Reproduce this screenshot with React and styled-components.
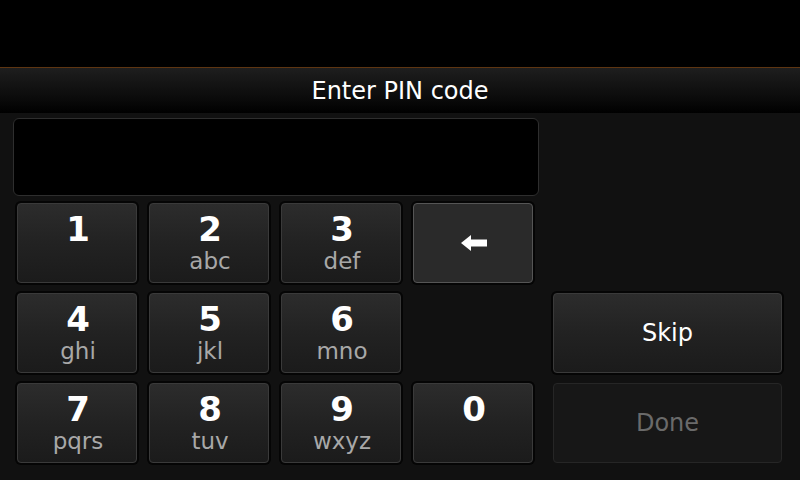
import React from "react";
import styled, { createGlobalStyle } from "styled-components";

const GlobalStyle = createGlobalStyle`
  html, body {
    margin: 0;
    padding: 0;
    background: #111111;
    font-family: "DejaVu Sans", "Noto Sans", sans-serif;
  }
`;

// 6 columns per row: four keys, a narrow spacer column, the action column
const keys = [
  { digit: "1", letters: "" },
  { digit: "2", letters: "abc" },
  { digit: "3", letters: "def" },
  { back: true },
  null,
  null,
  { digit: "4", letters: "ghi" },
  { digit: "5", letters: "jkl" },
  { digit: "6", letters: "mno" },
  null,
  null,
  { action: "Skip" },
  { digit: "7", letters: "pqrs" },
  { digit: "8", letters: "tuv" },
  { digit: "9", letters: "wxyz" },
  { digit: "0", letters: "" },
  null,
  { action: "Done", disabled: true },
];

const BackArrow = () => (
  <svg width="28" height="18" viewBox="0 0 28 18">
    <path d="M1 9 L11 1 L11 5.5 L27 5.5 L27 12.5 L11 12.5 L11 17 Z" fill="#fff" />
  </svg>
);

const App = () => {
  return (
    <Screen>
      <GlobalStyle />
      <TopStrip />
      <Header>
        <Title>Enter PIN code</Title>
      </Header>
      <Content>
        <PinField />
        <Pad>
          {keys.map((k, i) => {
            if (!k) return <Spacer key={i} />;
            if (k.back)
              return (
                <BackKey key={i}>
                  <BackArrow />
                </BackKey>
              );
            if (k.action)
              return (
                <ActionKey key={i} $disabled={k.disabled}>
                  {k.action}
                </ActionKey>
              );
            return (
              <Key key={i}>
                <Digit>{k.digit}</Digit>
                {k.letters && <Letters>{k.letters}</Letters>}
              </Key>
            );
          })}
        </Pad>
      </Content>
    </Screen>
  );
};
export default App;

const Screen = styled.div`
  width: 800px;
  height: 480px;
  background: #111111;
  overflow: hidden;
`;

const TopStrip = styled.div`
  height: 67px;
  background: #000;
  border-bottom: 1px solid #5e3511;
`;

const Header = styled.div`
  height: 45px;
  display: flex;
  align-items: center;
  justify-content: center;
  background: linear-gradient(to bottom, #1e1e1e 0%, #0a0a0a 70%, #000 100%);
`;

const Title = styled.div`
  color: #fff;
  font-size: 24px;
  margin-top: 1px;
`;

const Content = styled.div`
  padding: 5px 0 0 13px;
`;

const PinField = styled.div`
  width: 524px;
  height: 76px;
  background: #000;
  border: 1px solid #2e2e2e;
  border-radius: 6px;
`;

const Pad = styled.div`
  display: grid;
  grid-template-columns: repeat(4, 124px) 0 233px;
  grid-auto-rows: 84px;
  column-gap: 8px;
  row-gap: 6px;
  margin-top: 5px;
  margin-left: 2px;
`;

const Spacer = styled.div``;

const KeyBase = styled.div`
  margin: 2px;
  box-sizing: border-box;
  border-radius: 4px;
  box-shadow: 0 0 0 2px #050505;
  color: #fff;
`;

const Key = styled(KeyBase)`
  display: flex;
  flex-direction: column;
  align-items: center;
  padding-top: 8px;
  padding-left: 2px;
  border: 1px solid #3a3a3a;
  background: linear-gradient(to bottom, #2c2c2c 0%, #222 50%, #1b1b1b 100%);
`;

const BackKey = styled(KeyBase)`
  display: flex;
  align-items: center;
  justify-content: center;
  border: 1px solid #555;
  background: #2a2a2a;
  padding-left: 2px;
`;

const ActionKey = styled(KeyBase)`
  display: flex;
  align-items: center;
  justify-content: center;
  font-size: 24px;
  border: 1px solid ${(p) => (p.$disabled ? "#262626" : "#3a3a3a")};
  color: ${(p) => (p.$disabled ? "#6a6a6a" : "#fff")};
  box-shadow: ${(p) => (p.$disabled ? "none" : "0 0 0 2px #050505")};
  background: ${(p) =>
    p.$disabled
      ? "#171717"
      : "linear-gradient(to bottom, #2c2c2c 0%, #222 50%, #1b1b1b 100%)"};
`;

const Digit = styled.div`
  font-size: 34px;
  line-height: 34px;
  font-weight: bold;
`;

const Letters = styled.div`
  font-size: 23px;
  line-height: 23px;
  margin-top: 4px;
  color: #a8a8a8;
`;
